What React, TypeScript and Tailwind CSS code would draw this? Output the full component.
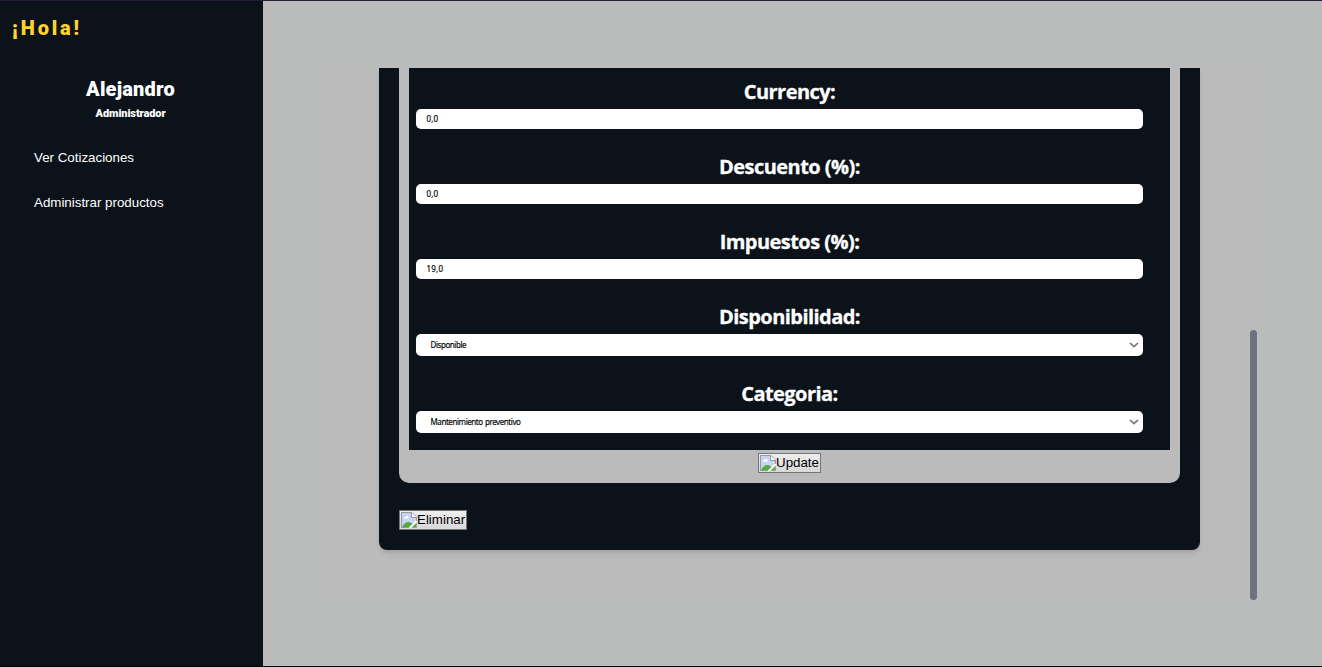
import React from "react";

function BrokenImage() {
  return (
    <svg width="16" height="16" viewBox="0 0 16 16" className="block shrink-0">
      <path d="M0.5 0.5H11L15.5 5V9L9 15.5H0.5Z" fill="#c3d4f4" stroke="#999" />
      <path d="M10.5 0.5V5.5H15.5" fill="#fff" stroke="#999" />
      <path d="M2.5 6.5Q2.5 5 4.5 5Q5 3.5 6.5 4Q8 4.500 8 6.500Z" fill="#fff" />
      <path d="M1 15Q4 9.500 8 10L12 12L9 15Z" fill="#54ac37" />
      <path d="M11 15.500L15.500 11V15.500Z" fill="#54ac37" stroke="#999" strokeWidth=".7" />
      <path d="M8.500 16L15.500 9" stroke="#fff" strokeWidth="1.700" />
    </svg>
  );
}

function ImageButton({ alt }: { alt: string }) {
  return (
    <button className="flex h-5 items-center border border-[#767676] bg-linear-to-b from-[#eeeeee] to-[#d8d8d8] pr-px pl-px font-['Liberation_Sans',sans-serif] text-[13.33px] leading-[18px] text-black">
      <BrokenImage />
      <span>{alt}</span>
    </button>
  );
}

function Label({ text }: { text: string }) {
  return <label className="block h-[35px] text-center font-['Open_Sans',sans-serif] text-[20px] leading-[35px] font-bold tracking-[-0.55px] text-white [-webkit-text-stroke:0.3px_white]">{text}</label>;
}

function Field({ label, value }: { label: string; value: string }) {
  return (
    <div className="h-[75px]">
      <Label text={label} />
      <div className="mr-[20px] flex h-5 items-center rounded-[5px] bg-white pl-[10.5px] font-['Noto_Sans',sans-serif] text-[8px] tracking-[0.2px] text-black [-webkit-text-stroke:0.15px_black]">{value}</div>
    </div>
  );
}

function SelectField({ label, value }: { label: string; value: string }) {
  return (
    <div className="h-[77px]">
      <Label text={label} />
      <div className="mr-[20px] flex h-[22px] items-center justify-between rounded-[5px] bg-white pr-1 pl-[14.5px] font-['Noto_Sans',sans-serif] text-[8px] tracking-[-0.43px] text-black">
        <span className="[word-spacing:0.6px] [-webkit-text-stroke:0.15px_black]">{value}</span>
        <svg width="10" height="6" viewBox="0 0 10 6" fill="none"><path d="M1 1L5 4.700L9 1" stroke="#757575" strokeWidth="1.700" /></svg>
      </div>
    </div>
  );
}

export default function App() {
  return (
    <div className="flex h-[667px] w-[1322px] overflow-hidden border-t border-b border-t-[#251c35] border-b-black bg-[#babcbb]">
      <aside className="w-[263px] shrink-0 bg-[#0b1219]">
        <h1 className="mt-[11px] ml-3 h-8 font-[Roboto,sans-serif] text-[20px] leading-8 font-black tracking-[2.8px] text-[#ffd22e]">¡Hola!</h1>
        <h2 className="mt-[31px] h-7 pr-0.5 text-center font-[Roboto,sans-serif] text-[20px] leading-7 font-black tracking-[0.2px] text-white">Alejandro</h2>
        <p className="h-5 pt-px pr-0.5 text-center font-[Roboto,sans-serif] text-[11px] leading-5 font-black tracking-[-0.1px] text-white">Administrador</p>
        <nav className="mt-[12px] pl-[34px] font-['Liberation_Sans',sans-serif] text-[13.33px] text-white">
          <a className="block h-[45px] leading-[45px]">Ver Cotizaciones</a>
          <a className="block h-[45px] leading-[45px]">Administrar productos</a>
        </nav>
      </aside>
      <main className="mt-[67px] ml-[59px] flex h-[532px] w-[935px] overflow-hidden bg-[#bcbbbb]">
        <section className="ml-[57px] h-[482px] w-[821px] rounded-b-[8px] bg-[#0b1219] px-5 shadow-md">
          <div className="h-[415px] rounded-b-[10px] bg-[#bcbbbb] px-[10px]">
            <form className="h-[382px] bg-[#0b1219] px-[7px] pt-[6px]">
              <Field label="Currency:" value="0,0" />
              <Field label="Descuento (%):" value="0,0" />
              <Field label="Impuestos (%):" value="19,0" />
              <SelectField label="Disponibilidad:" value="Disponible" />
              <SelectField label="Categoria:" value="Mantenimiento preventivo" />
            </form>
            <div className="flex justify-center pt-[3px]"><ImageButton alt="Update" /></div>
          </div>
          <div className="mt-[27px] flex"><ImageButton alt="Eliminar" /></div>
        </section>
        <div className="mt-[262px] ml-[50px] h-[270px] w-[7px] rounded-full bg-[#6b7280]" />
      </main>
    </div>
  );
}
